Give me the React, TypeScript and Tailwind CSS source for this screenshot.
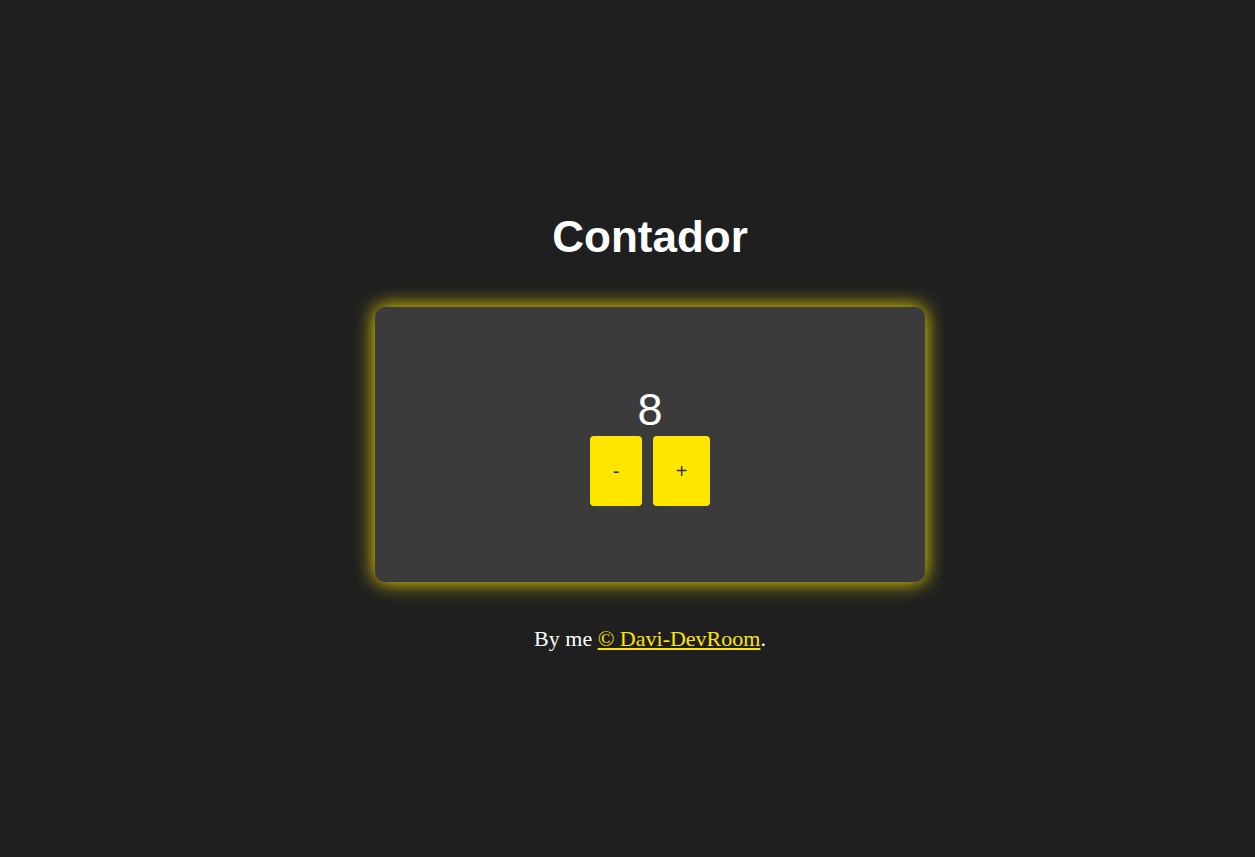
import { useState } from "react";

const App = () => {
  const [count, setCount] = useState(8);

  return (
    <div className="min-h-screen bg-[#1f1f1f] flex flex-col items-center justify-center pt-[6px] pl-[45px]">
      <h1 className="text-white text-[44px] font-bold leading-[50px] font-['Liberation_Sans',Arial,sans-serif]">
        Contador
      </h1>
      <div className="mt-[45px] w-[550px] h-[275px] rounded-[10px] bg-[#3b3b3b] shadow-[0_0_20px_#ffe600] flex flex-col items-center justify-center font-['Liberation_Sans',Arial,sans-serif]">
        <span className="text-white text-[45px] leading-[52px]">{count}</span>
        <div className="flex gap-[11px]">
          <button
            onClick={() => setCount((c) => c - 1)}
            className="w-[52px] h-[70px] rounded-[4px] bg-[#ffe600] text-[#333] text-[20px]"
          >
            -
          </button>
          <button
            onClick={() => setCount((c) => c + 1)}
            className="w-[57px] h-[70px] rounded-[4px] bg-[#ffe600] text-[#333] text-[20px]"
          >
            +
          </button>
        </div>
      </div>
      <p className="mt-[44px] text-white text-[22px] leading-[25px] font-['Liberation_Serif','Times_New_Roman',serif]">
        By me{" "}
        <a href="#" className="text-[#ffe600] underline">
          © Davi-DevRoom
        </a>
        .
      </p>
    </div>
  );
};

export default App;
